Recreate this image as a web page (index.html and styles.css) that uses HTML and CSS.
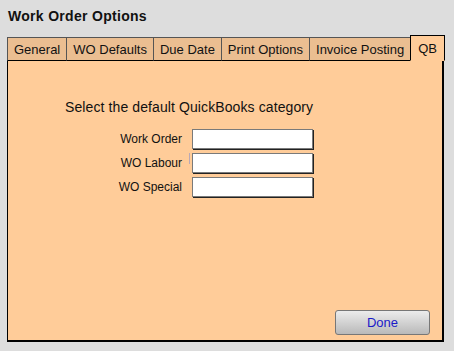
FILE: index.html
```html
<!DOCTYPE html>
<html lang="en">
<head>
  <meta charset="UTF-8">
  <meta name="viewport" content="width=device-width, initial-scale=1.0">
  <title>Work Order Options</title>
  <link rel="stylesheet" href="styles.css">
</head>
<body>
  <h1>Work Order Options</h1>

  <div class="tabs">
    <div class="tab">General</div>
    <div class="tab">WO Defaults</div>
    <div class="tab">Due Date</div>
    <div class="tab">Print Options</div>
    <div class="tab">Invoice Posting</div>
    <div class="tab active">QB</div>
  </div>

  <div class="panel">
    <p class="intro">Select the default QuickBooks category</p>

    <div class="form">
      <label for="wo">Work Order</label>
      <input type="text" id="wo">
      <label for="labour">WO Labour</label>
      <div class="field"><span class="caret"></span><input type="text" id="labour"></div>
      <label for="special">WO Special</label>
      <input type="text" id="special">
    </div>

    <button class="done">Done</button>
  </div>
</body>
</html>
```

FILE: styles.css
```css
/* General */
body {
  margin: 0;
  height: 351px;
  display: flex;
  flex-direction: column;
  background: #dddddd;
  font-family: 'Liberation Sans', Arial, sans-serif;
  color: #111;
}

h1 {
  margin: 0;
  padding: 8px 8px 0;
  font-size: 14px;
  line-height: 16px;
  font-weight: bold;
  letter-spacing: 0.3px;
}

/* Tabs */
.tabs {
  display: flex;
  align-items: flex-end;
  margin: 11px 0 -1px 7px;
  position: relative;
  z-index: 1;
}

.tab {
  flex: none;
  white-space: nowrap;
  height: 22px;
  line-height: 24px;
  padding: 0 6px;
  font-size: 13px;
  background: #ebbe91;
  border: 1px solid #555;
  border-right: none;
  border-bottom: 1px solid #000;
}

.tab.active {
  height: 24px;
  line-height: 25px;
  padding: 0 7px;
  background: #ffcc99;
  border: 1px solid #000;
  border-bottom-color: #ffcc99;
}

/* Panel */
.panel {
  flex: 1;
  display: flex;
  flex-direction: column;
  margin: 0 10px 9px 7px;
  background: #ffcc99;
  border: 1px solid #000;
  border-right-width: 2px;
  border-bottom-width: 2px;
}

.intro {
  margin: 37px 0 0 57px;
  font-size: 14px;
  line-height: 18px;
  letter-spacing: 0.1px;
}

.form {
  display: grid;
  grid-template-columns: 174px 121px;
  column-gap: 10px;
  row-gap: 4px;
  margin-top: 13px;
  align-items: center;
}

.form label {
  text-align: right;
  font-size: 12px;
}

.field {
  position: relative;
}

.caret {
  position: absolute;
  left: -3px;
  top: 0;
  width: 1px;
  height: 11px;
  background: #b8a8b8;
}

input {
  display: block;
  box-sizing: border-box;
  width: 121px;
  height: 20px;
  margin: 0;
  padding: 0 3px;
  background: #fff;
  border: 1px solid #7a7a7a;
  box-shadow: 1px 1px 0 #222;
}

.done {
  margin: auto 12px 5px auto;
  width: 95px;
  height: 25px;
  font-family: 'Liberation Sans', Arial, sans-serif;
  font-size: 13px;
  color: #1a1ac8;
  background: linear-gradient(#ececec, #b9b9b9);
  border: 1px solid #777;
  border-radius: 3px;
  cursor: pointer;
}
```
